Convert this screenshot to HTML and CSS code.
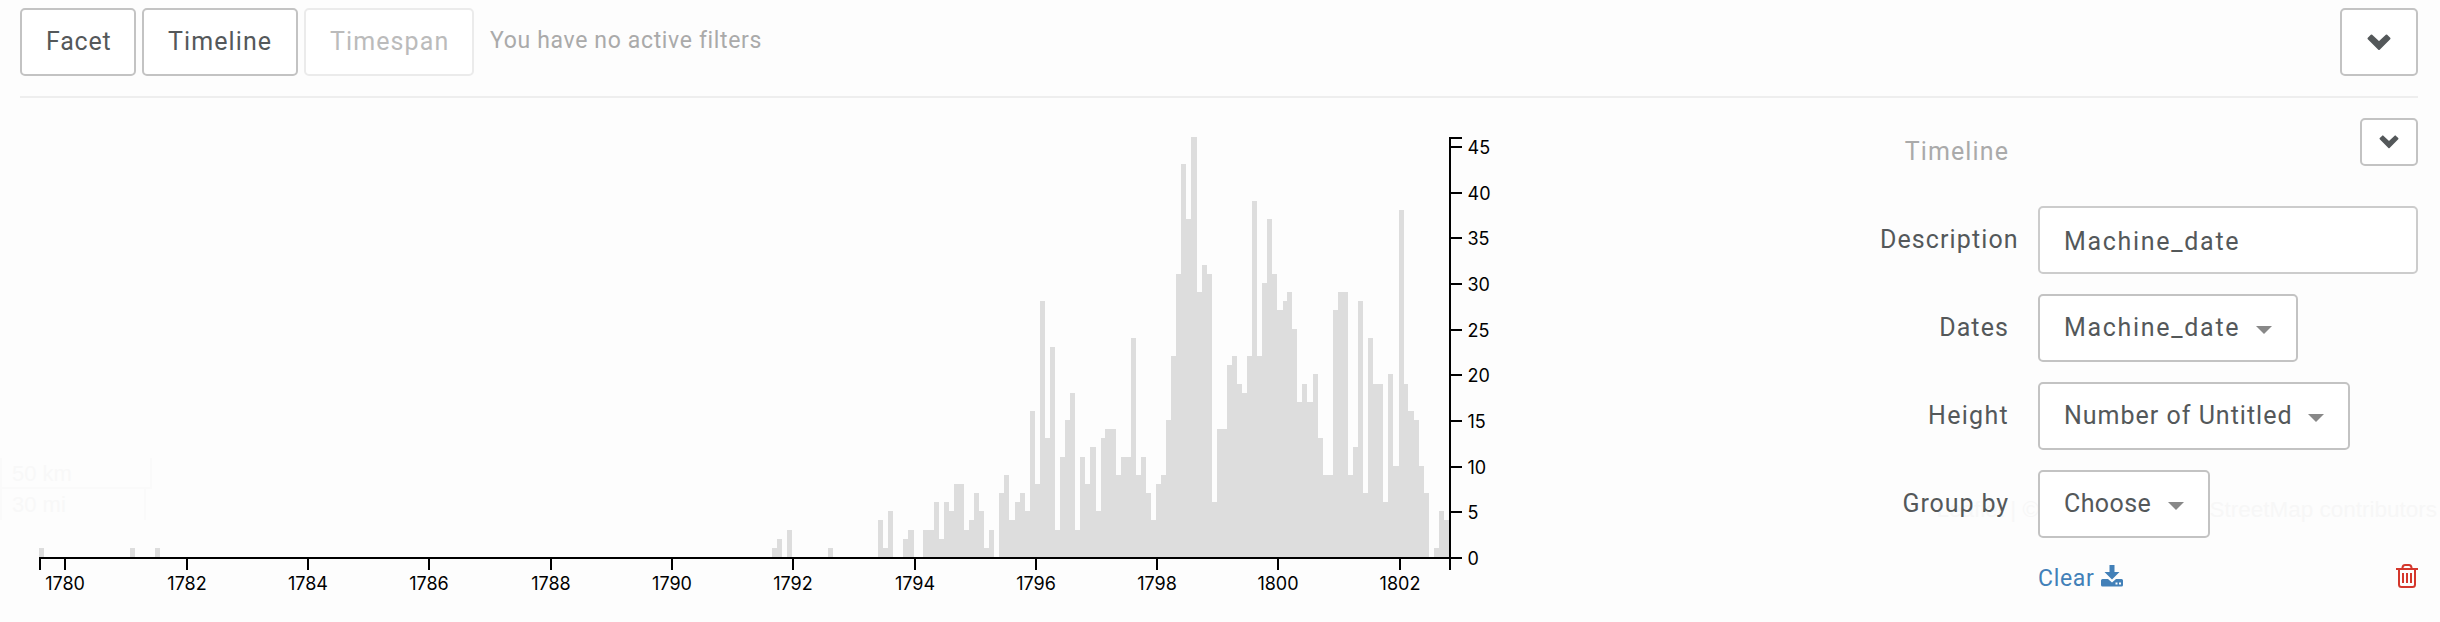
FILE: index.html
```html
<!DOCTYPE html>
<html lang="en">
<head>
    <meta charset="UTF-8">
    <title>Timeline</title>
    <link rel="stylesheet" href="styles.css">
</head>
<body>
    <!-- faded map controls behind the filters -->
    <div class="map-scale">
        <div class="scale-km">50 km</div>
        <div class="scale-mi">30 mi</div>
    </div>
    <div class="map-credits">Leaflet | © Mapbox © OpenStreetMap contributors</div>

    <div class="toolbar">
        <button class="btn btn-facet">Facet</button>
        <button class="btn btn-timeline">Timeline</button>
        <button class="btn btn-timespan" disabled>Timespan</button>
        <span class="filter-status">You have no active filters</span>
        <button class="btn btn-toggle">
            <svg width="24" height="17" viewBox="0 0 24 17"><path d="M1.5 4.5L4.5 1.5L12 8.5L19.5 1.5L22.5 4.5L12 15z"/></svg>
        </button>
    </div>

    <div class="content">
        <svg id="chart" width="1840" height="524" viewBox="0 98 1840 524"></svg>

        <div class="panel">
            <div class="row row-title">
                <span class="label label-muted">Timeline</span>
                <button class="btn btn-small">
                    <svg width="20" height="14" viewBox="0 0 24 17"><path d="M1.5 4.5L4.5 1.5L12 8.5L19.5 1.5L22.5 4.5L12 15z"/></svg>
                </button>
            </div>
            <div class="row">
                <span class="label">Description</span>
                <div class="field field-text">Machine_date</div>
            </div>
            <div class="row">
                <span class="label">Dates</span>
                <div class="field field-dates">Machine_date<i class="caret"></i></div>
            </div>
            <div class="row">
                <span class="label label-height">Height</span>
                <div class="field field-height">Number of Untitled<i class="caret"></i></div>
            </div>
            <div class="row">
                <span class="label label-group">Group by</span>
                <div class="field field-group">Choose<i class="caret"></i></div>
            </div>
            <div class="actions">
                <a class="clear">Clear</a>
                <svg class="download" width="22" height="22" viewBox="0 0 22 22">
                    <path d="M8.5 0h5v7h5L11 14.5L3.5 7h5z"/>
                    <path fill-rule="evenodd" d="M1.5 14H7l4 3.6L15 14h5.5q1.5 0 1.5 1.5v4.5q0 1.5-1.5 1.5h-19q-1.5 0-1.5-1.5v-4.5q0-1.5 1.5-1.5zM14.5 17.5v2h2v-2zM18 17.5v2h2v-2z"/>
                </svg>
                <svg class="trash" width="22" height="24" viewBox="0 0 22 24">
                    <path d="M0 5h22M3 5v15.5q0 2.5 2.5 2.5h11q2.5 0 2.5-2.5V5M6.5 5V3.5Q7 1 9 1h4q2 0 2.5 2.5V5"/>
                    <path d="M7 9v10M11 9v10M15 9v10"/>
                </svg>
            </div>
        </div>
    </div>

    <script src="chart.js"></script>
</body>
</html>
```
FILE: styles.css
```css
body {
    position: relative;
    margin: 0;
    height: 622px;
    overflow: hidden;
    background: #fdfdfd;
    color: #54585a;
    font-family: Roboto, sans-serif;
    font-size: 25px;
    line-height: 30px;
    letter-spacing: 1.1px;
}

/* toolbar */
.toolbar {
    position: relative;
    display: flex;
    gap: 6px;
    margin: 0 22px 0 20px;
    padding: 8px 0 20px;
    border-bottom: 2px solid #eee;
}
.btn {
    box-sizing: border-box;
    height: 68px;
    padding: 0 0 0 24px;
    border: 2px solid #c3c3c3;
    border-radius: 5px;
    background: #fff;
    color: inherit;
    font: inherit;
    letter-spacing: inherit;
    text-align: left;
}
.btn path {
    fill: #54585a;
    stroke: #54585a;
    stroke-width: 2;
    stroke-linejoin: round;
}
.btn-facet {
    width: 116px;
    letter-spacing: 0.8px;
}
.btn-timeline {
    width: 156px;
}
.btn-timespan {
    width: 170px;
    border-color: #ebebeb;
    color: #bbb;
}
.filter-status {
    margin: 18px 0 0 10px;
    color: #aaa;
    font-size: 23px;
    letter-spacing: 0.65px;
}
.btn-toggle,
.btn-small {
    display: flex;
    align-items: center;
    justify-content: center;
    margin-left: auto;
    padding: 0;
}
.btn-toggle {
    width: 78px;
}
.btn-small {
    width: 58px;
    height: 48px;
}

/* content */
.content {
    position: relative;
    display: flex;
}
.panel {
    width: 538px;
    margin-left: 40px;
    padding-top: 20px;
}
.row {
    display: flex;
    align-items: center;
    height: 68px;
    margin-bottom: 20px;
}
.row-title {
    align-items: flex-start;
}
.label {
    width: 129px;
    margin-right: 29px;
    text-align: right;
    white-space: nowrap;
}
.label-muted {
    margin-top: 19px;
    color: #aaa;
}
.label-height {
    letter-spacing: 1.3px;
}
.label-group {
    letter-spacing: 0.9px;
}
.field {
    box-sizing: border-box;
    display: flex;
    align-items: center;
    justify-content: space-between;
    height: 68px;
    padding: 0 24px;
    border: 2px solid #c3c3c3;
    border-radius: 5px;
    background: #fff;
    white-space: nowrap;
}
.field-text {
    width: 380px;
    padding-top: 3px;
    border-color: #ccc;
    letter-spacing: 1.7px;
}
.field-dates {
    width: 260px;
    letter-spacing: 1.7px;
}
.field-height {
    width: 312px;
    letter-spacing: 1px;
}
.field-group {
    width: 172px;
    letter-spacing: 0.4px;
}
.caret {
    margin-top: 3px;
    border: 8px solid transparent;
    border-top-color: #888;
    border-bottom: 0;
}
.actions {
    display: flex;
    margin-left: 158px;
    padding-top: 5px;
}
.clear {
    margin-top: 1px;
    color: #4280b8;
    font-size: 23px;
    letter-spacing: 0.7px;
}
.download {
    margin: 2px 0 0 6px;
    fill: #4280b8;
}
.trash {
    margin: 1px 0 0 auto;
    fill: none;
    stroke: #d4372c;
    stroke-width: 2;
}

/* chart */
.bar {
    fill: #ddd;
}
.axis {
    fill: none;
    stroke: #000;
    stroke-width: 2;
}
.tick {
    fill: #000;
    font-family: Inter, sans-serif;
    font-size: 18px;
    letter-spacing: 0;
}

/* map leftovers */
.map-scale {
    position: absolute;
    left: 0;
    top: 458px;
    color: #f8f8f8;
    font: 22px/31px "Liberation Sans", sans-serif;
    letter-spacing: 0;
}
.scale-km,
.scale-mi {
    box-sizing: border-box;
    height: 31px;
    border: 2px solid #fafafa;
    border-top: 0;
    padding-left: 10px;
}
.scale-km {
    width: 152px;
}
.scale-mi {
    width: 146px;
    border-bottom: 0;
}
.map-credits {
    position: absolute;
    right: 0;
    top: 493px;
    padding: 0 3px;
    color: #f7f7f7;
    font: 22.5px/34px "Liberation Sans", sans-serif;
    letter-spacing: 0;
    white-space: nowrap;
}
```
FILE: chart.js
```javascript
// items per month, January to December
const counts = {
    1779: [0, 0, 0, 0, 0, 0, 0, 1, 0, 0, 0, 0],
    1781: [0, 1, 0, 0, 0, 0, 1, 0, 0, 0, 0, 0],
    1791: [0, 0, 0, 0, 0, 0, 0, 0, 1, 2, 0, 3],
    1792: [0, 0, 0, 0, 0, 0, 0, 1, 0, 0, 0, 0],
    1793: [0, 0, 0, 0, 0, 4, 1, 5, 0, 0, 2, 3],
    1794: [0, 0, 3, 3, 6, 2, 6, 5, 8, 8, 3, 4],
    1795: [7, 5, 1, 3, 0, 7, 9, 4, 6, 7, 5, 16],
    1796: [8, 28, 13, 23, 3, 11, 15, 18, 3, 11, 8, 12],
    1797: [5, 13, 14, 14, 9, 11, 11, 24, 9, 11, 7, 4],
    1798: [8, 9, 15, 22, 31, 43, 37, 46, 29, 32, 31, 6],
    1799: [14, 14, 21, 22, 19, 18, 22, 39, 22, 30, 37, 31],
    1800: [27, 28, 29, 25, 17, 19, 17, 20, 13, 9, 9, 27],
    1801: [29, 29, 9, 12, 28, 7, 24, 19, 19, 6, 20, 10],
    1802: [38, 19, 16, 15, 10, 7, 0, 1, 5, 4]
};

const left = 40, right = 1450, top_ = 138, bottom = 558, max = 46;
const start = Date.UTC(1779, 7, 1);
const end = Date.UTC(1802, 10, 1);

function x(year, month) {
    return left + (Date.UTC(year, month, 1) - start) / (end - start) * (right - left);
}
function y(value) {
    return bottom - value / max * (bottom - top_);
}

let svg = '';
for (const year in counts) {
    counts[year].forEach((n, month) => {
        if (!n) return;
        const x0 = Math.floor(x(+year, month) - 0.4);
        const x1 = Math.floor(x(+year, month + 1) - 0.4);
        const y0 = Math.round(y(n) - 1);
        svg += `<rect class="bar" x="${x0}" y="${y0}" width="${x1 - x0}" height="${bottom - 1 - y0}"/>`;
    });
}

svg += `<path class="axis" d="M${left} 570V${bottom}H${right}V570"/>`;
svg += `<path class="axis" d="M1462 ${top_}H${right}V${bottom}H1462"/>`;

for (let year = 1780; year <= 1802; year += 2) {
    const tx = Math.round(x(year, 0));
    svg += `<path class="axis" d="M${tx} ${bottom}V570"/>`;
    svg += `<text class="tick" x="${tx}" y="590" text-anchor="middle">${year}</text>`;
}
for (let n = 0; n <= 45; n += 5) {
    const ty = Math.round(y(n));
    svg += `<path class="axis" d="M${right} ${ty}H1462"/>`;
    svg += `<text class="tick" x="1467.5" y="${ty + 6.5}">${n}</text>`;
}
document.getElementById('chart').innerHTML = svg;
```
